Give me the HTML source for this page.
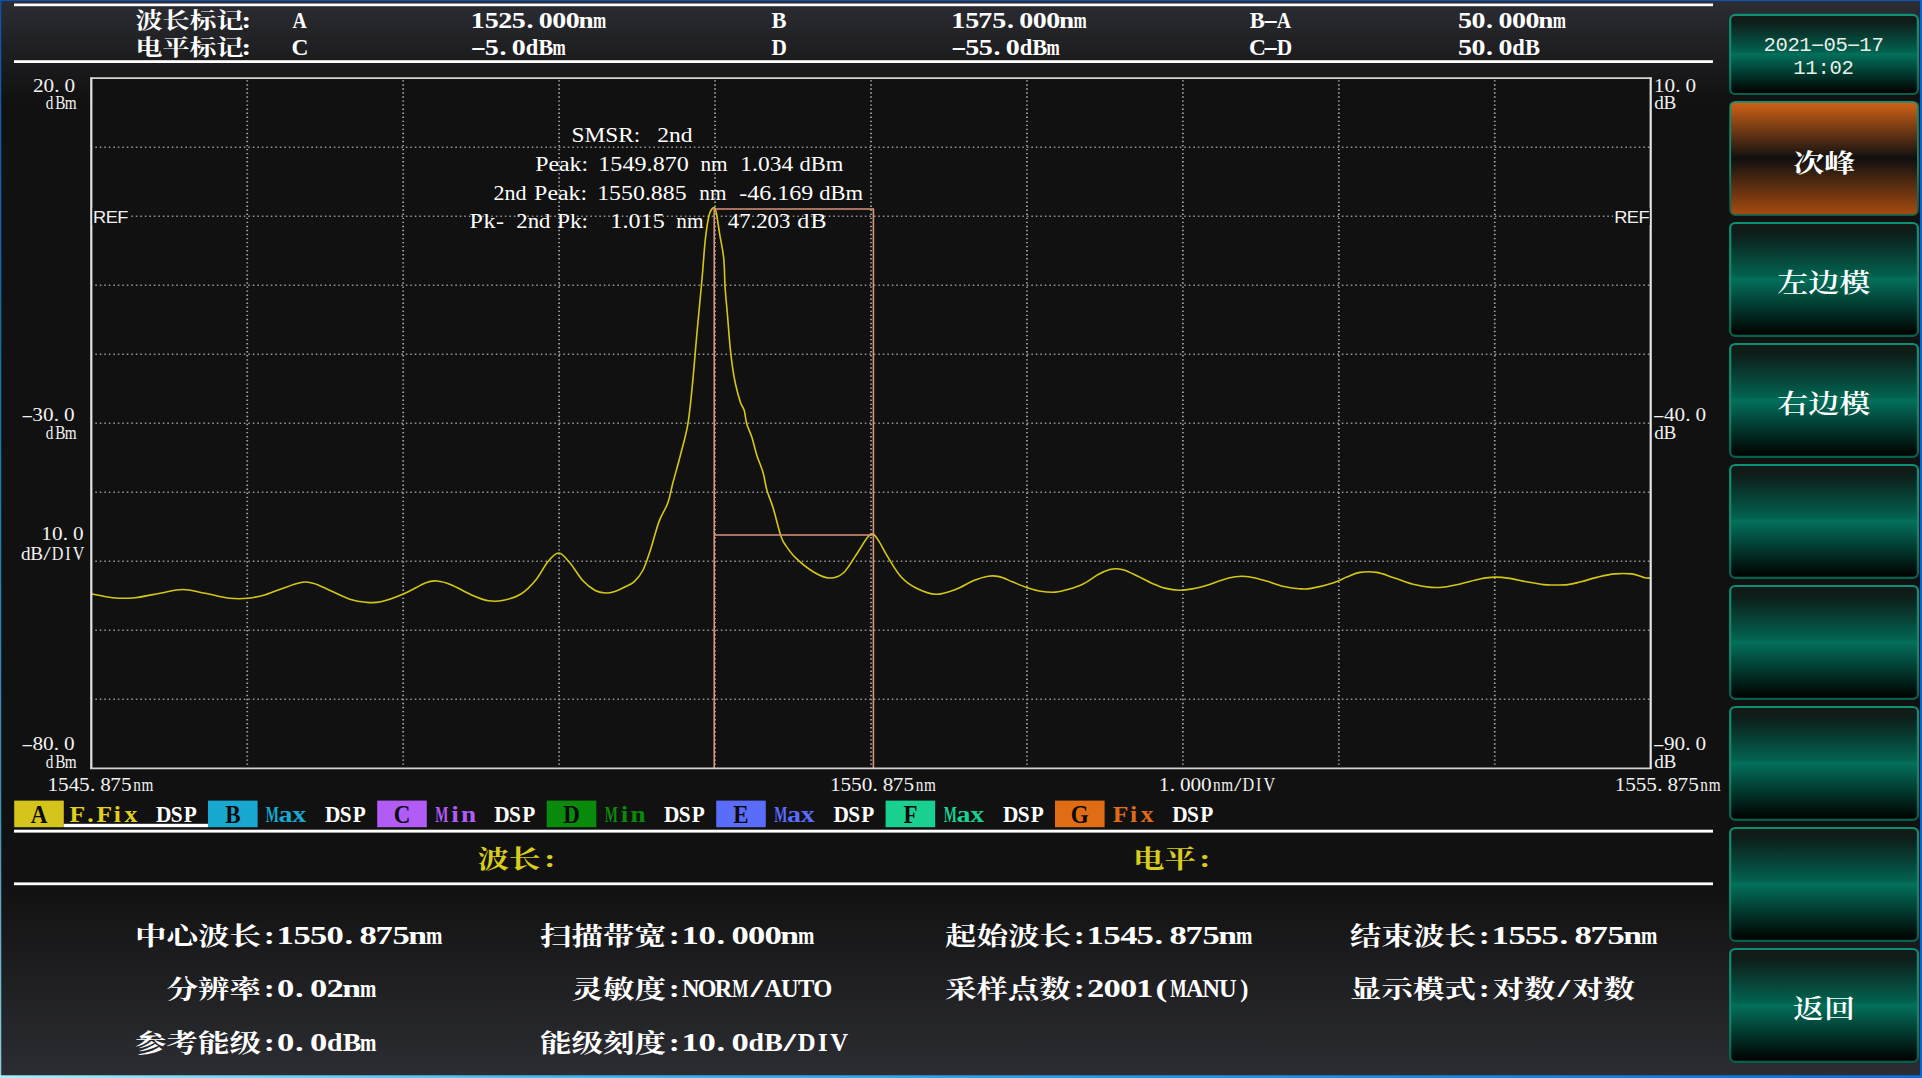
<!DOCTYPE html>
<html lang="zh-CN"><head><meta charset="utf-8"><title>OSA</title>
<style>html,body{margin:0;padding:0;background:#111;overflow:hidden}svg{display:block}text{white-space:pre}</style></head>
<body>
<svg width="1922" height="1078" viewBox="0 0 1922 1078">
<defs>
<linearGradient id="gtop" x1="0" y1="0" x2="0" y2="1">
 <stop offset="0" stop-color="#2c2d33"/><stop offset="1" stop-color="#111111"/>
</linearGradient>
<linearGradient id="gbot" x1="0" y1="0" x2="0" y2="1">
 <stop offset="0" stop-color="#111111"/><stop offset="1" stop-color="#2c2d32"/>
</linearGradient>
<linearGradient id="gbtn" x1="0" y1="0" x2="0" y2="1">
 <stop offset="0" stop-color="#141816"/>
 <stop offset="0.10" stop-color="#0d1f1b"/>
 <stop offset="0.47" stop-color="#02624f"/>
 <stop offset="0.495" stop-color="#03705c"/>
 <stop offset="0.93" stop-color="#000e0a"/>
 <stop offset="1" stop-color="#000000"/>
</linearGradient>
<linearGradient id="gstk" x1="0" y1="0" x2="0" y2="1">
 <stop offset="0" stop-color="#0a9072"/><stop offset="0.6" stop-color="#0a8a6e"/><stop offset="1" stop-color="#06604e"/>
</linearGradient>
<linearGradient id="gora" x1="0" y1="0" x2="0" y2="1">
 <stop offset="0" stop-color="#d26216"/>
 <stop offset="0.5" stop-color="#101010"/>
 <stop offset="1" stop-color="#a84c10"/>
</linearGradient>
<linearGradient id="gbb" x1="0" y1="0" x2="1" y2="0">
 <stop offset="0" stop-color="#a8f0fc"/><stop offset="0.12" stop-color="#78d8f8"/><stop offset="0.3" stop-color="#40b8f0"/>
 <stop offset="0.6" stop-color="#2098e8"/><stop offset="1" stop-color="#0870dc"/>
</linearGradient>
<linearGradient id="gleft" x1="0" y1="0" x2="0" y2="1">
 <stop offset="0" stop-color="#1050b0"/><stop offset="0.4" stop-color="#1478b0"/><stop offset="0.75" stop-color="#3c90b0"/><stop offset="1" stop-color="#90d0e0"/>
</linearGradient>
</defs>
<rect x="0" y="0" width="1922" height="1078" fill="#111111"/>
<rect x="0" y="0" width="1922" height="100" fill="url(#gtop)"/>
<rect x="0" y="883" width="1922" height="193" fill="url(#gbot)"/>
<rect x="0" y="0" width="1922" height="1.1" fill="#1050b0"/>
<rect x="0" y="0" width="1.25" height="1078" fill="url(#gleft)"/>
<rect x="1920" y="0" width="2" height="1078" fill="#0068d8"/>
<rect x="0" y="1075.3" width="1922" height="2.7" fill="url(#gbb)"/>
<rect x="14" y="3.5" width="1699" height="2.7" fill="#ffffff"/>
<rect x="14" y="60.2" width="1699" height="2.8" fill="#ffffff"/>
<rect x="14" y="829.7" width="1699" height="2.9" fill="#ffffff"/>
<rect x="14" y="882.4" width="1699" height="2.8" fill="#ffffff"/>
<text transform="translate(135.50 28.40) scale(1.2730 1)" font-family='"Liberation Serif", "Noto Serif CJK SC", serif' font-size="21.21" font-weight="bold" fill="#fff" >波长标记<tspan x="83.32" y="-0.60" font-size="22.60">:</tspan></text>
<text transform="translate(135.50 55.20) scale(1.2730 1)" font-family='"Liberation Serif", "Noto Serif CJK SC", serif' font-size="21.21" font-weight="bold" fill="#fff" >电平标记<tspan x="83.32" y="-0.60" font-size="22.60">:</tspan></text>
<text transform="translate(293.00 27.80) scale(1.2400 1)" font-family='"Liberation Serif", "Noto Serif CJK SC", serif' font-size="22.60" font-weight="bold" fill="#fff" x="-0.36" textLength="11.56" lengthAdjust="spacingAndGlyphs">A</text>
<text transform="translate(293.00 54.60) scale(1.2400 1)" font-family='"Liberation Serif", "Noto Serif CJK SC", serif' font-size="22.60" font-weight="bold" fill="#fff" x="-1.12" textLength="13.65" lengthAdjust="spacingAndGlyphs">C</text>
<text transform="translate(471.50 27.80) scale(1.2400 1)" font-family='"Liberation Serif", "Noto Serif CJK SC", serif' font-size="22.60" font-weight="bold" fill="#fff"><tspan x="-0.53 10.64 21.58 32.42 44.30 54.23 65.12 76.00">1525.000</tspan><tspan x="86.31" textLength="12.21" lengthAdjust="spacingAndGlyphs">n</tspan><tspan x="98.04" textLength="10.64" lengthAdjust="spacingAndGlyphs">m</tspan></text>
<text transform="translate(471.50 54.60) scale(1.2400 1)" font-family='"Liberation Serif", "Noto Serif CJK SC", serif' font-size="22.60" font-weight="bold" fill="#fff"><tspan x="-0.91" textLength="12.72" lengthAdjust="spacingAndGlyphs">-</tspan><tspan x="10.64 22.52 32.45">5.0</tspan><tspan x="43.68 53.93" textLength="22.18" lengthAdjust="spacingAndGlyphs">dB</tspan><tspan x="65.38" textLength="10.64" lengthAdjust="spacingAndGlyphs">m</tspan></text>
<text transform="translate(772.00 27.80) scale(1.2400 1)" font-family='"Liberation Serif", "Noto Serif CJK SC", serif' font-size="22.60" font-weight="bold" fill="#fff" x="-0.50" textLength="12.10" lengthAdjust="spacingAndGlyphs">B</text>
<text transform="translate(772.00 54.60) scale(1.2400 1)" font-family='"Liberation Serif", "Noto Serif CJK SC", serif' font-size="22.60" font-weight="bold" fill="#fff" x="-0.50" textLength="12.43" lengthAdjust="spacingAndGlyphs">D</text>
<text transform="translate(952.00 27.80) scale(1.2400 1)" font-family='"Liberation Serif", "Noto Serif CJK SC", serif' font-size="22.60" font-weight="bold" fill="#fff"><tspan x="-0.53 10.64 21.20 32.42 44.30 54.23 65.12 76.00">1575.000</tspan><tspan x="86.31" textLength="12.21" lengthAdjust="spacingAndGlyphs">n</tspan><tspan x="98.04" textLength="10.64" lengthAdjust="spacingAndGlyphs">m</tspan></text>
<text transform="translate(952.00 54.60) scale(1.2400 1)" font-family='"Liberation Serif", "Noto Serif CJK SC", serif' font-size="22.60" font-weight="bold" fill="#fff"><tspan x="-0.91" textLength="12.72" lengthAdjust="spacingAndGlyphs">-</tspan><tspan x="10.64 21.53 33.41 43.34">55.0</tspan><tspan x="54.57 64.82" textLength="22.18" lengthAdjust="spacingAndGlyphs">dB</tspan><tspan x="76.27" textLength="10.64" lengthAdjust="spacingAndGlyphs">m</tspan></text>
<text transform="translate(1250.30 27.80) scale(1.2400 1)" font-family='"Liberation Serif", "Noto Serif CJK SC", serif' font-size="22.60" font-weight="bold" fill="#fff"><tspan x="-0.50" textLength="12.10" lengthAdjust="spacingAndGlyphs">B</tspan><tspan x="9.97" textLength="12.72" lengthAdjust="spacingAndGlyphs">-</tspan><tspan x="21.42" textLength="11.56" lengthAdjust="spacingAndGlyphs">A</tspan></text>
<text transform="translate(1250.30 54.60) scale(1.2400 1)" font-family='"Liberation Serif", "Noto Serif CJK SC", serif' font-size="22.60" font-weight="bold" fill="#fff"><tspan x="-1.12" textLength="13.65" lengthAdjust="spacingAndGlyphs">C</tspan><tspan x="9.97" textLength="12.72" lengthAdjust="spacingAndGlyphs">-</tspan><tspan x="21.27" textLength="12.43" lengthAdjust="spacingAndGlyphs">D</tspan></text>
<text transform="translate(1458.20 27.80) scale(1.2400 1)" font-family='"Liberation Serif", "Noto Serif CJK SC", serif' font-size="22.60" font-weight="bold" fill="#fff"><tspan x="-0.25 10.68 22.52 32.45 43.34 54.23">50.000</tspan><tspan x="64.53" textLength="12.21" lengthAdjust="spacingAndGlyphs">n</tspan><tspan x="76.27" textLength="10.64" lengthAdjust="spacingAndGlyphs">m</tspan></text>
<text transform="translate(1458.20 54.60) scale(1.2400 1)" font-family='"Liberation Serif", "Noto Serif CJK SC", serif' font-size="22.60" font-weight="bold" fill="#fff"><tspan x="-0.25 10.68 22.52 32.45">50.0</tspan><tspan x="43.68 53.93" textLength="22.18" lengthAdjust="spacingAndGlyphs">dB</tspan></text>
<rect x="91.3" y="78.2" width="1559.4" height="690.1" fill="#111111"/>
<path d="M247.24 80.2 V767.3 M403.18 80.2 V767.3 M559.12 80.2 V767.3 M715.06 80.2 V767.3 M871.00 80.2 V767.3 M1026.94 80.2 V767.3 M1182.88 80.2 V767.3 M1338.82 80.2 V767.3 M1494.76 80.2 V767.3" stroke="#a2a2a2" stroke-width="1.8" stroke-dasharray="1.4 2.643" fill="none"/>
<path d="M95.3 147.21 H1649.7 M95.3 216.22 H1649.7 M95.3 285.23 H1649.7 M95.3 354.24 H1649.7 M95.3 423.25 H1649.7 M95.3 492.26 H1649.7 M95.3 561.27 H1649.7 M95.3 630.28 H1649.7 M95.3 699.29 H1649.7" stroke="#929292" stroke-width="1.4" stroke-dasharray="1.6 2.9" fill="none"/>
<path d="M92.0 594.0 C95.4 594.6 105.4 597.1 112.6 597.7 C119.8 598.3 127.1 598.5 135.0 597.7 C142.9 597.0 152.0 594.6 160.0 593.2 C168.0 591.8 175.3 589.5 182.8 589.5 C190.3 589.5 197.1 591.8 205.0 593.2 C212.9 594.7 222.8 597.4 230.0 598.2 C237.2 599.0 242.1 598.8 248.0 598.2 C253.9 597.6 257.2 597.2 265.5 594.7 C273.8 592.2 290.1 585.1 298.0 583.2 C305.9 581.3 307.6 582.0 313.0 583.2 C318.4 584.5 324.3 588.0 330.6 590.7 C336.9 593.4 344.9 597.6 350.7 599.5 C356.5 601.4 360.7 601.9 365.7 602.3 C370.7 602.7 374.5 603.2 380.8 601.8 C387.1 600.4 395.8 597.2 403.3 594.0 C410.8 590.8 420.3 584.9 425.9 582.7 C431.5 580.5 432.8 580.7 437.0 581.0 C441.2 581.3 445.3 582.4 451.0 584.7 C456.7 587.0 464.8 592.0 471.0 594.7 C477.2 597.4 483.1 599.9 488.5 600.8 C493.9 601.7 498.2 601.4 503.6 600.3 C509.0 599.2 515.6 597.4 521.0 594.0 C526.4 590.6 531.5 585.1 536.0 579.7 C540.5 574.3 544.2 566.0 548.0 561.5 C551.8 557.0 555.1 552.8 558.8 553.0 C562.5 553.2 566.0 558.4 570.0 563.0 C574.0 567.6 578.5 575.9 582.7 580.5 C586.9 585.1 591.5 588.4 595.2 590.5 C599.0 592.6 602.1 592.8 605.2 593.0 C608.3 593.2 610.6 592.8 614.0 591.8 C617.4 590.8 622.0 588.5 625.3 586.8 C628.6 585.1 631.1 584.5 634.0 581.8 C636.9 579.1 640.1 575.7 642.8 570.5 C645.5 565.3 647.6 558.5 650.3 550.4 C653.0 542.2 656.1 529.5 659.0 521.6 C661.9 513.7 665.6 509.3 667.9 502.8 C670.2 496.3 670.8 490.7 672.9 482.8 C675.0 474.9 677.9 465.0 680.4 455.2 C682.9 445.4 685.9 436.0 687.9 423.9 C689.9 411.8 691.2 397.1 692.6 382.8 C694.0 368.5 695.4 350.7 696.5 338.0 C697.6 325.3 698.4 317.2 699.4 306.8 C700.4 296.4 701.3 286.7 702.3 275.7 C703.3 264.7 704.1 250.7 705.2 240.6 C706.3 230.5 707.8 220.7 709.1 215.3 C710.4 209.9 711.9 208.7 713.0 208.0 C714.1 207.3 714.9 206.9 716.0 211.4 C717.1 215.9 718.5 227.0 719.8 234.8 C721.1 242.6 722.8 249.4 723.7 258.2 C724.6 267.0 724.5 277.7 725.1 287.4 C725.8 297.1 726.8 306.9 727.6 316.6 C728.4 326.3 729.2 337.4 730.0 345.8 C730.8 354.2 731.6 360.8 732.5 367.2 C733.4 373.6 734.2 378.1 735.5 384.0 C736.8 389.9 739.0 398.2 740.5 402.6 C742.0 407.0 743.2 407.1 744.3 410.6 C745.3 414.2 745.5 419.5 746.8 423.9 C748.0 428.3 750.1 431.9 751.8 437.1 C753.5 442.3 754.9 449.3 756.8 455.2 C758.7 461.1 761.4 466.8 763.1 472.7 C764.8 478.6 765.2 484.4 766.9 490.3 C768.6 496.2 770.8 500.3 773.1 507.8 C775.4 515.3 778.6 529.1 780.7 535.4 C782.8 541.7 783.2 541.6 785.7 545.4 C788.2 549.1 791.1 553.5 795.7 557.9 C800.3 562.3 807.6 568.4 813.2 571.7 C818.8 575.1 824.5 577.8 829.5 578.0 C834.5 578.2 838.9 576.8 843.3 573.0 C847.7 569.2 851.8 561.2 855.8 555.4 C859.8 549.5 864.2 541.4 867.1 537.9 C870.0 534.4 871.0 533.7 872.9 534.1 C874.8 534.5 875.8 536.4 878.4 540.4 C881.0 544.4 884.6 551.8 888.4 557.9 C892.2 564.0 896.4 571.7 901.0 576.7 C905.6 581.7 910.2 585.1 916.0 588.0 C921.8 590.9 929.3 594.1 936.0 594.3 C942.7 594.5 949.8 591.5 956.0 589.3 C962.2 587.0 967.8 583.0 973.1 580.8 C978.5 578.6 983.7 576.9 988.1 576.2 C992.5 575.5 995.2 575.7 999.3 576.6 C1003.3 577.5 1007.7 579.9 1012.4 581.8 C1017.1 583.7 1022.7 586.2 1027.4 587.8 C1032.1 589.4 1035.8 590.5 1040.5 591.2 C1045.2 591.9 1050.8 592.4 1055.5 592.1 C1060.2 591.8 1063.9 590.7 1068.6 589.3 C1073.3 587.9 1078.6 586.2 1083.6 583.7 C1088.6 581.2 1094.2 576.6 1098.6 574.3 C1103.0 571.9 1106.8 570.5 1109.8 569.6 C1112.8 568.7 1113.9 568.6 1116.4 568.7 C1118.9 568.8 1121.2 569.0 1124.8 570.2 C1128.4 571.5 1133.2 574.0 1137.9 576.2 C1142.6 578.5 1148.2 581.7 1152.9 583.7 C1157.6 585.7 1161.6 587.3 1166.0 588.4 C1170.4 589.5 1174.7 590.1 1179.1 590.2 C1183.5 590.3 1187.6 589.7 1192.3 588.9 C1197.0 588.1 1202.2 586.7 1207.2 585.2 C1212.2 583.7 1217.5 581.3 1222.2 579.9 C1226.9 578.5 1231.9 577.4 1235.3 576.8 C1238.7 576.2 1239.7 576.1 1242.8 576.2 C1245.9 576.4 1249.6 576.8 1254.0 577.7 C1258.4 578.6 1264.0 580.3 1269.0 581.8 C1274.0 583.3 1279.0 585.4 1284.0 586.5 C1289.0 587.6 1294.5 588.4 1299.0 588.7 C1303.5 589.0 1305.4 589.4 1311.2 588.4 C1317.0 587.4 1327.8 584.6 1333.7 582.7 C1339.6 580.8 1342.4 578.8 1346.8 577.1 C1351.2 575.4 1354.9 573.2 1359.9 572.4 C1364.9 571.6 1371.2 571.5 1376.8 572.4 C1382.4 573.3 1387.5 575.7 1393.7 577.7 C1400.0 579.7 1408.1 583.0 1414.3 584.6 C1420.5 586.2 1426.1 587.0 1431.1 587.4 C1436.1 587.8 1439.2 587.6 1444.2 587.0 C1449.2 586.4 1455.2 585.0 1461.1 583.7 C1467.0 582.4 1474.2 580.1 1479.8 579.0 C1485.4 577.9 1489.8 577.2 1494.8 577.1 C1499.8 577.0 1504.5 577.6 1509.8 578.4 C1515.1 579.2 1521.0 580.8 1526.6 581.8 C1532.2 582.8 1539.1 584.1 1543.5 584.6 C1547.9 585.1 1548.9 585.0 1552.9 585.0 C1557.0 585.0 1563.1 585.1 1567.8 584.6 C1572.5 584.1 1576.0 583.0 1581.0 581.8 C1586.0 580.5 1592.2 578.4 1597.8 577.1 C1603.4 575.8 1609.1 574.4 1614.7 573.9 C1620.3 573.4 1626.5 573.3 1631.5 573.9 C1636.5 574.5 1641.5 577.0 1644.6 577.7 C1647.7 578.4 1649.0 578.0 1649.9 578.1" stroke="#d4c714" stroke-width="1.6" fill="none" stroke-linejoin="round"/>
<path d="M714.2 768 V209 H873.4 V768 M714.2 535 H873.4" stroke="#d9947a" stroke-width="1.6" fill="none"/>
<path d="M91.3 77.4 V769.1 M1650.7 77.4 V769.1" stroke="#e4e4e4" stroke-width="2.2" fill="none"/>
<path d="M90.2 78.2 H1651.8 M90.2 768.3 H1651.8" stroke="#d4d4d4" stroke-width="1.7" fill="none"/>
<rect x="92.6" y="208" width="37" height="17" fill="#111111"/>
<rect x="1613" y="208" width="36.6" height="17" fill="#111111"/>
<text transform="translate(93.00 222.60) scale(1.1140 1)" font-family='"Liberation Sans", "Noto Sans CJK SC", sans-serif' font-size="16.40" font-weight="normal" fill="#f0f0f0" text-anchor="start" textLength="31.87" lengthAdjust="spacing" >REF</text>
<text transform="translate(1614.20 222.60) scale(1.1140 1)" font-family='"Liberation Sans", "Noto Sans CJK SC", sans-serif' font-size="16.40" font-weight="normal" fill="#f0f0f0" text-anchor="start" textLength="31.87" lengthAdjust="spacing" >REF</text>
<text transform="translate(33.00 91.70) scale(1.1600 1)" font-family='"Liberation Serif", "Noto Serif CJK SC", serif' font-size="18.30" font-weight="normal" fill="#f2f2f2" x="0.05 9.00 18.35 27.11">20.0</text>
<text transform="translate(44.50 109.30) scale(1.1600 1)" font-family='"Liberation Serif", "Noto Serif CJK SC", serif' font-size="18.30" font-weight="normal" fill="#f2f2f2" x="1.08 9.33 17.48" textLength="25.56" lengthAdjust="spacingAndGlyphs">dBm</text>
<text transform="translate(22.00 421.30) scale(1.1600 1)" font-family='"Liberation Serif", "Noto Serif CJK SC", serif' font-size="18.30" font-weight="normal" fill="#f2f2f2"><tspan x="-0.63" textLength="10.28" lengthAdjust="spacingAndGlyphs">-</tspan><tspan x="8.92 18.05 27.40 36.16">30.0</tspan></text>
<text transform="translate(44.50 438.80) scale(1.1600 1)" font-family='"Liberation Serif", "Noto Serif CJK SC", serif' font-size="18.30" font-weight="normal" fill="#f2f2f2" x="1.08 9.33 17.48" textLength="25.56" lengthAdjust="spacingAndGlyphs">dBm</text>
<text transform="translate(41.50 540.00) scale(1.1600 1)" font-family='"Liberation Serif", "Noto Serif CJK SC", serif' font-size="18.30" font-weight="normal" fill="#f2f2f2" x="-0.30 9.00 18.35 27.11">10.0</text>
<text transform="translate(20.80 559.60) scale(1.1600 1)" font-family='"Liberation Serif", "Noto Serif CJK SC", serif' font-size="18.30" font-weight="normal" fill="#f2f2f2"><tspan x="0.20 8.23" textLength="19.29" lengthAdjust="spacingAndGlyphs">dB</tspan><tspan x="19.40" textLength="6.47" lengthAdjust="spacingAndGlyphs">/</tspan><tspan x="26.73 38.41 44.76" textLength="24.74" lengthAdjust="spacingAndGlyphs">DIV</tspan></text>
<text transform="translate(22.00 750.00) scale(1.1600 1)" font-family='"Liberation Serif", "Noto Serif CJK SC", serif' font-size="18.30" font-weight="normal" fill="#f2f2f2"><tspan x="-0.63" textLength="10.28" lengthAdjust="spacingAndGlyphs">-</tspan><tspan x="9.00 18.05 27.40 36.16">80.0</tspan></text>
<text transform="translate(44.50 767.50) scale(1.1600 1)" font-family='"Liberation Serif", "Noto Serif CJK SC", serif' font-size="18.30" font-weight="normal" fill="#f2f2f2" x="1.08 9.33 17.48" textLength="25.56" lengthAdjust="spacingAndGlyphs">dBm</text>
<text transform="translate(1654.00 91.70) scale(1.1600 1)" font-family='"Liberation Serif", "Noto Serif CJK SC", serif' font-size="18.30" font-weight="normal" fill="#f2f2f2" x="-0.30 9.00 18.35 27.11">10.0</text>
<text transform="translate(1654.00 109.30) scale(1.1600 1)" font-family='"Liberation Serif", "Noto Serif CJK SC", serif' font-size="18.30" font-weight="normal" fill="#f2f2f2" x="0.20 8.23" textLength="19.29" lengthAdjust="spacingAndGlyphs">dB</text>
<text transform="translate(1653.50 421.30) scale(1.1600 1)" font-family='"Liberation Serif", "Noto Serif CJK SC", serif' font-size="18.30" font-weight="normal" fill="#f2f2f2"><tspan x="-0.63" textLength="10.28" lengthAdjust="spacingAndGlyphs">-</tspan><tspan x="8.97 18.05 27.40 36.16">40.0</tspan></text>
<text transform="translate(1654.00 438.80) scale(1.1600 1)" font-family='"Liberation Serif", "Noto Serif CJK SC", serif' font-size="18.30" font-weight="normal" fill="#f2f2f2" x="0.20 8.23" textLength="19.29" lengthAdjust="spacingAndGlyphs">dB</text>
<text transform="translate(1653.50 750.00) scale(1.1600 1)" font-family='"Liberation Serif", "Noto Serif CJK SC", serif' font-size="18.30" font-weight="normal" fill="#f2f2f2"><tspan x="-0.63" textLength="10.28" lengthAdjust="spacingAndGlyphs">-</tspan><tspan x="9.08 18.05 27.40 36.16">90.0</tspan></text>
<text transform="translate(1654.00 767.50) scale(1.1600 1)" font-family='"Liberation Serif", "Noto Serif CJK SC", serif' font-size="18.30" font-weight="normal" fill="#f2f2f2" x="0.20 8.23" textLength="19.29" lengthAdjust="spacingAndGlyphs">dB</text>
<text transform="translate(47.80 790.80) scale(1.1600 1)" font-family='"Liberation Serif", "Noto Serif CJK SC", serif' font-size="18.30" font-weight="normal" fill="#f2f2f2"><tspan x="-0.30 8.83 18.02 26.93 36.45 45.21 53.92 63.14">1545.875</tspan><tspan x="73.60 80.84" textLength="16.79" lengthAdjust="spacingAndGlyphs">nm</tspan></text>
<text transform="translate(830.30 790.80) scale(1.1600 1)" font-family='"Liberation Serif", "Noto Serif CJK SC", serif' font-size="18.30" font-weight="normal" fill="#f2f2f2"><tspan x="-0.30 8.83 17.88 27.11 36.45 45.21 53.92 63.14">1550.875</tspan><tspan x="73.60 80.84" textLength="16.79" lengthAdjust="spacingAndGlyphs">nm</tspan></text>
<text transform="translate(1159.00 790.80) scale(1.1600 1)" font-family='"Liberation Serif", "Noto Serif CJK SC", serif' font-size="18.30" font-weight="normal" fill="#f2f2f2"><tspan x="-0.30 9.29 18.05 27.11 36.16">1.000</tspan><tspan x="46.45 53.69" textLength="16.79" lengthAdjust="spacingAndGlyphs">nm</tspan><tspan x="64.66" textLength="6.47" lengthAdjust="spacingAndGlyphs">/</tspan><tspan x="71.99 83.67 90.02" textLength="24.74" lengthAdjust="spacingAndGlyphs">DIV</tspan></text>
<text transform="translate(1615.00 790.80) scale(1.1600 1)" font-family='"Liberation Serif", "Noto Serif CJK SC", serif' font-size="18.30" font-weight="normal" fill="#f2f2f2"><tspan x="-0.30 8.83 17.88 26.93 36.45 45.21 53.92 63.14">1555.875</tspan><tspan x="73.60 80.84" textLength="16.79" lengthAdjust="spacingAndGlyphs">nm</tspan></text>
<text transform="translate(571.43 141.80) scale(1.0836 1)" font-family='"Liberation Serif", "Noto Serif CJK SC", serif' font-size="21.60" font-weight="normal" fill="#ffffff">SMSR:</text>
<text transform="translate(657.27 141.80) scale(1.0902 1)" font-family='"Liberation Serif", "Noto Serif CJK SC", serif' font-size="21.60" font-weight="normal" fill="#ffffff">2nd</text>
<text transform="translate(535.21 171.40) scale(1.1027 1)" font-family='"Liberation Serif", "Noto Serif CJK SC", serif' font-size="21.60" font-weight="normal" fill="#ffffff">Peak:</text>
<text transform="translate(598.29 171.40) scale(1.1140 1)" font-family='"Liberation Serif", "Noto Serif CJK SC", serif' font-size="21.60" font-weight="normal" fill="#ffffff" textLength="81.27" lengthAdjust="spacing">1549.870</text>
<text transform="translate(700.41 171.40) scale(0.9825 1)" font-family='"Liberation Serif", "Noto Serif CJK SC", serif' font-size="21.60" font-weight="normal" fill="#ffffff">nm</text>
<text transform="translate(740.34 171.40) scale(1.0870 1)" font-family='"Liberation Serif", "Noto Serif CJK SC", serif' font-size="21.60" font-weight="normal" fill="#ffffff">1.034</text>
<text transform="translate(799.48 171.40) scale(1.0443 1)" font-family='"Liberation Serif", "Noto Serif CJK SC", serif' font-size="21.60" font-weight="normal" fill="#ffffff">dBm</text>
<text transform="translate(493.43 200.30) scale(1.0197 1)" font-family='"Liberation Serif", "Noto Serif CJK SC", serif' font-size="21.60" font-weight="normal" fill="#ffffff">2nd</text>
<text transform="translate(534.11 200.30) scale(1.1049 1)" font-family='"Liberation Serif", "Noto Serif CJK SC", serif' font-size="21.60" font-weight="normal" fill="#ffffff">Peak:</text>
<text transform="translate(597.20 200.30) scale(1.1040 1)" font-family='"Liberation Serif", "Noto Serif CJK SC", serif' font-size="21.60" font-weight="normal" fill="#ffffff">1550.885</text>
<text transform="translate(699.31 200.30) scale(0.9825 1)" font-family='"Liberation Serif", "Noto Serif CJK SC", serif' font-size="21.60" font-weight="normal" fill="#ffffff">nm</text>
<text transform="translate(739.31 200.30) scale(1.1124 1)" font-family='"Liberation Serif", "Noto Serif CJK SC", serif' font-size="21.60" font-weight="normal" fill="#ffffff">-46.169</text>
<text transform="translate(819.18 200.30) scale(1.0443 1)" font-family='"Liberation Serif", "Noto Serif CJK SC", serif' font-size="21.60" font-weight="normal" fill="#ffffff">dBm</text>
<text transform="translate(469.61 227.60) scale(1.1140 1)" font-family='"Liberation Serif", "Noto Serif CJK SC", serif' font-size="21.60" font-weight="normal" fill="#ffffff" textLength="30.94" lengthAdjust="spacing">Pk-</text>
<text transform="translate(516.30 227.60) scale(1.0549 1)" font-family='"Liberation Serif", "Noto Serif CJK SC", serif' font-size="21.60" font-weight="normal" fill="#ffffff">2nd</text>
<text transform="translate(557.03 227.60) scale(1.0779 1)" font-family='"Liberation Serif", "Noto Serif CJK SC", serif' font-size="21.60" font-weight="normal" fill="#ffffff">Pk:</text>
<text transform="translate(610.29 227.60) scale(1.1140 1)" font-family='"Liberation Serif", "Noto Serif CJK SC", serif' font-size="21.60" font-weight="normal" fill="#ffffff" textLength="48.88" lengthAdjust="spacing">1.015</text>
<text transform="translate(676.31 227.60) scale(0.9863 1)" font-family='"Liberation Serif", "Noto Serif CJK SC", serif' font-size="21.60" font-weight="normal" fill="#ffffff">nm</text>
<text transform="translate(727.76 227.60) scale(1.0545 1)" font-family='"Liberation Serif", "Noto Serif CJK SC", serif' font-size="21.60" font-weight="normal" fill="#ffffff">47.203</text>
<text transform="translate(797.23 227.60) scale(1.1140 1)" font-family='"Liberation Serif", "Noto Serif CJK SC", serif' font-size="21.60" font-weight="normal" fill="#ffffff" textLength="26.43" lengthAdjust="spacing">dB</text>
<rect x="14.2" y="800.6" width="49.6" height="26.6" fill="#d4c41c"/>
<text transform="translate(39.00 822.60) scale(0.9200 1)" font-family='"Liberation Serif", "Noto Serif CJK SC", serif' font-size="25.00" font-weight="bold" fill="#0a0a0a" text-anchor="middle" >A</text>
<text transform="translate(70.20 821.70) scale(1.2500 1)" font-family='"Liberation Serif", "Noto Serif CJK SC", serif' font-size="22.40" font-weight="bold" fill="#e0d01c" x="-0.55 13.64 21.05 34.87 43.49" textLength="46.15" lengthAdjust="spacingAndGlyphs">F.Fix</text>
<text transform="translate(156.50 821.70) scale(1.2500 1)" font-family='"Liberation Serif", "Noto Serif CJK SC", serif' font-size="22.40" font-weight="bold" fill="#ffffff" x="-0.50 11.36 21.88" textLength="32.27" lengthAdjust="spacingAndGlyphs">DSP</text>
<rect x="208.0" y="800.6" width="49.6" height="26.6" fill="#18a8d0"/>
<text transform="translate(232.80 822.60) scale(0.9200 1)" font-family='"Liberation Serif", "Noto Serif CJK SC", serif' font-size="25.00" font-weight="bold" fill="#0a0a0a" text-anchor="middle" >B</text>
<text transform="translate(265.50 821.70) scale(1.2500 1)" font-family='"Liberation Serif", "Noto Serif CJK SC", serif' font-size="22.40" font-weight="bold" fill="#18a8d0"><tspan x="0.21" textLength="10.51" lengthAdjust="spacingAndGlyphs">M</tspan><tspan x="10.41 21.42">ax</tspan></text>
<text transform="translate(325.50 821.70) scale(1.2500 1)" font-family='"Liberation Serif", "Noto Serif CJK SC", serif' font-size="22.40" font-weight="bold" fill="#ffffff" x="-0.50 11.36 21.88" textLength="32.27" lengthAdjust="spacingAndGlyphs">DSP</text>
<rect x="377.2" y="800.6" width="49.6" height="26.6" fill="#b25cf8"/>
<text transform="translate(402.00 822.60) scale(0.9200 1)" font-family='"Liberation Serif", "Noto Serif CJK SC", serif' font-size="25.00" font-weight="bold" fill="#0a0a0a" text-anchor="middle" >C</text>
<text transform="translate(435.00 821.70) scale(1.2500 1)" font-family='"Liberation Serif", "Noto Serif CJK SC", serif' font-size="22.40" font-weight="bold" fill="#b25cf8"><tspan x="0.21" textLength="10.51" lengthAdjust="spacingAndGlyphs">M</tspan><tspan x="13.09 20.82" textLength="18.17" lengthAdjust="spacingAndGlyphs">in</tspan></text>
<text transform="translate(494.80 821.70) scale(1.2500 1)" font-family='"Liberation Serif", "Noto Serif CJK SC", serif' font-size="22.40" font-weight="bold" fill="#ffffff" x="-0.50 11.36 21.88" textLength="32.27" lengthAdjust="spacingAndGlyphs">DSP</text>
<rect x="546.7" y="800.6" width="49.6" height="26.6" fill="#0a8a0a"/>
<text transform="translate(571.50 822.60) scale(0.9200 1)" font-family='"Liberation Serif", "Noto Serif CJK SC", serif' font-size="25.00" font-weight="bold" fill="#0a0a0a" text-anchor="middle" >D</text>
<text transform="translate(604.50 821.70) scale(1.2500 1)" font-family='"Liberation Serif", "Noto Serif CJK SC", serif' font-size="22.40" font-weight="bold" fill="#0a8a0a"><tspan x="0.21" textLength="10.51" lengthAdjust="spacingAndGlyphs">M</tspan><tspan x="13.09 20.82" textLength="18.17" lengthAdjust="spacingAndGlyphs">in</tspan></text>
<text transform="translate(664.50 821.70) scale(1.2500 1)" font-family='"Liberation Serif", "Noto Serif CJK SC", serif' font-size="22.40" font-weight="bold" fill="#ffffff" x="-0.50 11.36 21.88" textLength="32.27" lengthAdjust="spacingAndGlyphs">DSP</text>
<rect x="716.2" y="800.6" width="49.6" height="26.6" fill="#5a6cfa"/>
<text transform="translate(741.00 822.60) scale(0.9200 1)" font-family='"Liberation Serif", "Noto Serif CJK SC", serif' font-size="25.00" font-weight="bold" fill="#0a0a0a" text-anchor="middle" >E</text>
<text transform="translate(774.00 821.70) scale(1.2500 1)" font-family='"Liberation Serif", "Noto Serif CJK SC", serif' font-size="22.40" font-weight="bold" fill="#5a6cfa"><tspan x="0.21" textLength="10.51" lengthAdjust="spacingAndGlyphs">M</tspan><tspan x="10.41 21.42">ax</tspan></text>
<text transform="translate(834.00 821.70) scale(1.2500 1)" font-family='"Liberation Serif", "Noto Serif CJK SC", serif' font-size="22.40" font-weight="bold" fill="#ffffff" x="-0.50 11.36 21.88" textLength="32.27" lengthAdjust="spacingAndGlyphs">DSP</text>
<rect x="885.6" y="800.6" width="49.6" height="26.6" fill="#1ad090"/>
<text transform="translate(910.40 822.60) scale(0.9200 1)" font-family='"Liberation Serif", "Noto Serif CJK SC", serif' font-size="25.00" font-weight="bold" fill="#0a0a0a" text-anchor="middle" >F</text>
<text transform="translate(943.50 821.70) scale(1.2500 1)" font-family='"Liberation Serif", "Noto Serif CJK SC", serif' font-size="22.40" font-weight="bold" fill="#1ad090"><tspan x="0.21" textLength="10.51" lengthAdjust="spacingAndGlyphs">M</tspan><tspan x="10.41 21.42">ax</tspan></text>
<text transform="translate(1003.50 821.70) scale(1.2500 1)" font-family='"Liberation Serif", "Noto Serif CJK SC", serif' font-size="22.40" font-weight="bold" fill="#ffffff" x="-0.50 11.36 21.88" textLength="32.27" lengthAdjust="spacingAndGlyphs">DSP</text>
<rect x="1055.0" y="800.6" width="49.6" height="26.6" fill="#e06c14"/>
<text transform="translate(1079.80 822.60) scale(0.9200 1)" font-family='"Liberation Serif", "Noto Serif CJK SC", serif' font-size="25.00" font-weight="bold" fill="#0a0a0a" text-anchor="middle" >G</text>
<text transform="translate(1113.50 821.70) scale(1.2500 1)" font-family='"Liberation Serif", "Noto Serif CJK SC", serif' font-size="22.40" font-weight="bold" fill="#e06c14" x="-0.55 13.27 21.89" textLength="28.49" lengthAdjust="spacingAndGlyphs">Fix</text>
<text transform="translate(1172.80 821.70) scale(1.2500 1)" font-family='"Liberation Serif", "Noto Serif CJK SC", serif' font-size="22.40" font-weight="bold" fill="#ffffff" x="-0.50 11.36 21.88" textLength="32.27" lengthAdjust="spacingAndGlyphs">DSP</text>
<rect x="63.8" y="823.8" width="144.2" height="3.4" fill="#ffffff"/>
<text transform="translate(477.50 868.30) scale(1.2730 1)" font-family='"Liberation Serif", "Noto Serif CJK SC", serif' font-size="24.74" font-weight="bold" fill="#d8cc1c" >波长<tspan x="52.49" y="-0.90" font-size="26.20">:</tspan></text>
<text transform="translate(1133.00 868.30) scale(1.2730 1)" font-family='"Liberation Serif", "Noto Serif CJK SC", serif' font-size="24.74" font-weight="bold" fill="#d8cc1c" >电平<tspan x="52.10" y="-0.90" font-size="26.20">:</tspan></text>
<text transform="translate(135.00 945.00) scale(1.2730 1)" font-family='"Liberation Serif", "Noto Serif CJK SC", serif' font-size="24.74" font-weight="bold" fill="#fff" >中心波长<tspan x="101.19" y="-1.00" font-size="26.20">:</tspan></text>
<text transform="translate(277.50 944.00) scale(1.3600 1)" font-family='"Liberation Serif", "Noto Serif CJK SC", serif' font-size="26.20" font-weight="bold" fill="#fff"><tspan x="-0.66 11.79 23.92 36.10 49.35 60.36 72.08 84.58" textLength="95.49" lengthAdjust="spacingAndGlyphs">1550.875</tspan><tspan x="96.10" textLength="13.76" lengthAdjust="spacingAndGlyphs">n</tspan><tspan x="109.17" textLength="12.03" lengthAdjust="spacingAndGlyphs">m</tspan></text>
<text transform="translate(540.00 945.00) scale(1.2730 1)" font-family='"Liberation Serif", "Noto Serif CJK SC", serif' font-size="24.74" font-weight="bold" fill="#fff" >扫描带宽<tspan x="101.19" y="-1.00" font-size="26.20">:</tspan></text>
<text transform="translate(682.50 944.00) scale(1.3600 1)" font-family='"Liberation Serif", "Noto Serif CJK SC", serif' font-size="26.20" font-weight="bold" fill="#fff"><tspan x="-0.66 11.83 25.09 36.10 48.23 60.36" textLength="70.03" lengthAdjust="spacingAndGlyphs">10.000</tspan><tspan x="71.84" textLength="13.76" lengthAdjust="spacingAndGlyphs">n</tspan><tspan x="84.91" textLength="12.03" lengthAdjust="spacingAndGlyphs">m</tspan></text>
<text transform="translate(945.00 945.00) scale(1.2730 1)" font-family='"Liberation Serif", "Noto Serif CJK SC", serif' font-size="24.74" font-weight="bold" fill="#fff" >起始波长<tspan x="101.19" y="-1.00" font-size="26.20">:</tspan></text>
<text transform="translate(1087.50 944.00) scale(1.3600 1)" font-family='"Liberation Serif", "Noto Serif CJK SC", serif' font-size="26.20" font-weight="bold" fill="#fff"><tspan x="-0.66 11.79 24.03 36.05 49.35 60.36 72.08 84.58" textLength="95.49" lengthAdjust="spacingAndGlyphs">1545.875</tspan><tspan x="96.10" textLength="13.76" lengthAdjust="spacingAndGlyphs">n</tspan><tspan x="109.17" textLength="12.03" lengthAdjust="spacingAndGlyphs">m</tspan></text>
<text transform="translate(1350.00 945.00) scale(1.2730 1)" font-family='"Liberation Serif", "Noto Serif CJK SC", serif' font-size="24.74" font-weight="bold" fill="#fff" >结束波长<tspan x="101.19" y="-1.00" font-size="26.20">:</tspan></text>
<text transform="translate(1492.50 944.00) scale(1.3600 1)" font-family='"Liberation Serif", "Noto Serif CJK SC", serif' font-size="26.20" font-weight="bold" fill="#fff"><tspan x="-0.66 11.79 23.92 36.05 49.35 60.36 72.08 84.58" textLength="95.49" lengthAdjust="spacingAndGlyphs">1555.875</tspan><tspan x="96.10" textLength="13.76" lengthAdjust="spacingAndGlyphs">n</tspan><tspan x="109.17" textLength="12.03" lengthAdjust="spacingAndGlyphs">m</tspan></text>
<text transform="translate(166.50 998.10) scale(1.2730 1)" font-family='"Liberation Serif", "Noto Serif CJK SC", serif' font-size="24.74" font-weight="bold" fill="#fff" >分辨率<tspan x="76.45" y="-1.00" font-size="26.20">:</tspan></text>
<text transform="translate(277.50 997.10) scale(1.3600 1)" font-family='"Liberation Serif", "Noto Serif CJK SC", serif' font-size="26.20" font-weight="bold" fill="#fff"><tspan x="-0.30 12.95 23.96 36.11" textLength="44.56" lengthAdjust="spacingAndGlyphs">0.02</tspan><tspan x="47.57" textLength="13.76" lengthAdjust="spacingAndGlyphs">n</tspan><tspan x="60.64" textLength="12.03" lengthAdjust="spacingAndGlyphs">m</tspan></text>
<text transform="translate(571.50 998.10) scale(1.2730 1)" font-family='"Liberation Serif", "Noto Serif CJK SC", serif' font-size="24.74" font-weight="bold" fill="#fff" >灵敏度<tspan x="76.45" y="-1.00" font-size="26.20">:</tspan></text>
<text transform="translate(682.50 997.10) scale(1.3600 1)" font-family='"Liberation Serif", "Noto Serif CJK SC", serif' font-size="26.20" font-weight="bold" fill="#fff"><tspan x="-0.42 11.27 23.67" textLength="39.60" lengthAdjust="spacingAndGlyphs">NOR</tspan><tspan x="36.55" textLength="11.98" lengthAdjust="spacingAndGlyphs">M</tspan><tspan x="49.96" textLength="9.26" lengthAdjust="spacingAndGlyphs">/</tspan><tspan x="60.19 72.35 84.97 96.11" textLength="52.12" lengthAdjust="spacingAndGlyphs">AUTO</tspan></text>
<text transform="translate(945.00 998.10) scale(1.2730 1)" font-family='"Liberation Serif", "Noto Serif CJK SC", serif' font-size="24.74" font-weight="bold" fill="#fff" >采样点数<tspan x="101.19" y="-1.00" font-size="26.20">:</tspan></text>
<text transform="translate(1087.50 997.10) scale(1.3600 1)" font-family='"Liberation Serif", "Noto Serif CJK SC", serif' font-size="26.20" font-weight="bold" fill="#fff"><tspan x="-0.29 11.83 23.96 35.74" textLength="50.93" lengthAdjust="spacingAndGlyphs">2001</tspan><tspan x="50.08">(</tspan><tspan x="60.81" textLength="11.98" lengthAdjust="spacingAndGlyphs">M</tspan><tspan x="72.32 84.43 96.61 112.36" textLength="45.09" lengthAdjust="spacingAndGlyphs">ANU)</tspan></text>
<text transform="translate(1350.00 998.10) scale(1.2730 1)" font-family='"Liberation Serif", "Noto Serif CJK SC", serif' font-size="24.74" font-weight="bold" fill="#fff" >显示模式<tspan x="101.19" y="-1.00" font-size="26.20">:</tspan><tspan x="111.94" y="0" font-size="24.74">对数</tspan><tspan x="162.96" y="-1.00" font-size="26.20" textLength="9.89" lengthAdjust="spacingAndGlyphs">/</tspan><tspan x="174.39" y="0" font-size="24.74">对数</tspan></text>
<text transform="translate(135.00 1051.90) scale(1.2730 1)" font-family='"Liberation Serif", "Noto Serif CJK SC", serif' font-size="24.74" font-weight="bold" fill="#fff" >参考能级<tspan x="101.19" y="-1.00" font-size="26.20">:</tspan></text>
<text transform="translate(277.50 1050.90) scale(1.3600 1)" font-family='"Liberation Serif", "Noto Serif CJK SC", serif' font-size="26.20" font-weight="bold" fill="#fff"><tspan x="-0.30 12.95 23.96" textLength="31.83" lengthAdjust="spacingAndGlyphs">0.0</tspan><tspan x="36.48 47.90" textLength="24.99" lengthAdjust="spacingAndGlyphs">dB</tspan><tspan x="60.64" textLength="12.03" lengthAdjust="spacingAndGlyphs">m</tspan></text>
<text transform="translate(540.00 1051.90) scale(1.2730 1)" font-family='"Liberation Serif", "Noto Serif CJK SC", serif' font-size="24.74" font-weight="bold" fill="#fff" >能级刻度<tspan x="101.19" y="-1.00" font-size="26.20">:</tspan></text>
<text transform="translate(682.50 1050.90) scale(1.3600 1)" font-family='"Liberation Serif", "Noto Serif CJK SC", serif' font-size="26.20" font-weight="bold" fill="#fff"><tspan x="-0.66 11.83 25.09 36.10" textLength="44.56" lengthAdjust="spacingAndGlyphs">10.0</tspan><tspan x="48.61 60.03" textLength="24.99" lengthAdjust="spacingAndGlyphs">dB</tspan><tspan x="74.22" textLength="9.26" lengthAdjust="spacingAndGlyphs">/</tspan><tspan x="84.71 99.59 108.69" textLength="33.33" lengthAdjust="spacingAndGlyphs">DIV</tspan></text>
<rect x="1730.2" y="14.9" width="187.7" height="79.1" rx="5.2" ry="4.8" fill="url(#gbtn)" stroke="url(#gstk)" stroke-width="2.2"/>
<rect x="1730.2" y="101.8" width="187.7" height="113.3" rx="5.2" ry="4.8" fill="url(#gora)" stroke="url(#gstk)" stroke-width="1.8"/>
<rect x="1730.2" y="223.0" width="187.7" height="112.9" rx="5.2" ry="4.8" fill="url(#gbtn)" stroke="url(#gstk)" stroke-width="2.2"/>
<rect x="1730.2" y="344.0" width="187.7" height="112.9" rx="5.2" ry="4.8" fill="url(#gbtn)" stroke="url(#gstk)" stroke-width="2.2"/>
<rect x="1730.2" y="465.0" width="187.7" height="112.9" rx="5.2" ry="4.8" fill="url(#gbtn)" stroke="url(#gstk)" stroke-width="2.2"/>
<rect x="1730.2" y="586.0" width="187.7" height="112.9" rx="5.2" ry="4.8" fill="url(#gbtn)" stroke="url(#gstk)" stroke-width="2.2"/>
<rect x="1730.2" y="707.0" width="187.7" height="112.9" rx="5.2" ry="4.8" fill="url(#gbtn)" stroke="url(#gstk)" stroke-width="2.2"/>
<rect x="1730.2" y="828.0" width="187.7" height="112.9" rx="5.2" ry="4.8" fill="url(#gbtn)" stroke="url(#gstk)" stroke-width="2.2"/>
<rect x="1730.2" y="949.0" width="187.7" height="112.9" rx="5.2" ry="4.8" fill="url(#gbtn)" stroke="url(#gstk)" stroke-width="2.2"/>
<text transform="translate(1763.60 50.80) scale(1.0000 1)" font-family='"Liberation Mono", "Noto Sans CJK SC", monospace' font-size="20.60" font-weight="normal" fill="#e8efe9"><tspan x="-0.18 11.83 23.82 35.57">2021</tspan><tspan x="42.16" textLength="23.70" lengthAdjust="spacingAndGlyphs">-</tspan><tspan x="59.83 71.83">05</tspan><tspan x="78.16" textLength="23.70" lengthAdjust="spacingAndGlyphs">-</tspan><tspan x="95.57 107.83">17</tspan></text>
<text transform="translate(1793.60 74.00) scale(1.0000 1)" font-family='"Liberation Mono", "Noto Sans CJK SC", monospace' font-size="20.60" font-weight="normal" fill="#e8efe9" x="-0.43 11.57 23.83 35.83 47.82">11:02</text>
<text transform="translate(1793.30 171.60) scale(1.2200 1)" font-family='"Liberation Serif", "Noto Serif CJK SC", serif' font-size="25.41" font-weight="bold" fill="#fff" >次峰</text>
<text transform="translate(1777.20 292.40) scale(1.2000 1)" font-family='"Liberation Serif", "Noto Serif CJK SC", serif' font-size="25.83" font-weight="600" fill="#fff" >左边模</text>
<text transform="translate(1777.20 413.40) scale(1.2000 1)" font-family='"Liberation Serif", "Noto Serif CJK SC", serif' font-size="25.83" font-weight="600" fill="#fff" >右边模</text>
<text transform="translate(1793.00 1018.00) scale(1.2000 1)" font-family='"Liberation Serif", "Noto Serif CJK SC", serif' font-size="25.83" font-weight="600" fill="#fff" >返回</text>
</svg>
</body></html>
